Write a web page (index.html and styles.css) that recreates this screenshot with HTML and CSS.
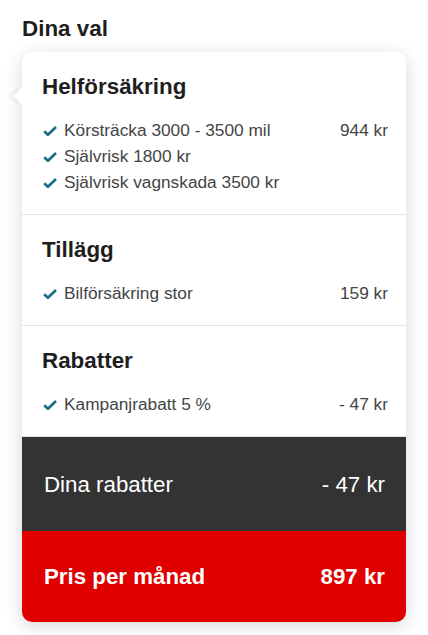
FILE: index.html
```html
<!DOCTYPE html>
<html lang="sv">
<head>
    <meta charset="UTF-8">
    <meta name="viewport" content="width=device-width, initial-scale=1.0">
    <title>Dina val</title>
    <link rel="stylesheet" href="styles.css">
</head>
<body>
    <div id="container">
        <h2 class="page-title">Dina val</h2>

        <div class="summary-card">
            <div class="section">
                <h3>Helförsäkring</h3>
                <ul class="item-list">
                    <li><svg class="check" viewBox="0 0 14 10"><path d="M1.2 5.2 L4.9 8.8 L13 1"/></svg><span class="label">Körsträcka 3000 - 3500 mil</span><span class="price">944 kr</span></li>
                    <li><svg class="check" viewBox="0 0 14 10"><path d="M1.2 5.2 L4.9 8.8 L13 1"/></svg><span class="label">Självrisk 1800 kr</span></li>
                    <li><svg class="check" viewBox="0 0 14 10"><path d="M1.2 5.2 L4.9 8.8 L13 1"/></svg><span class="label">Självrisk vagnskada 3500 kr</span></li>
                </ul>
            </div>

            <div class="section">
                <h3>Tillägg</h3>
                <ul class="item-list">
                    <li><svg class="check" viewBox="0 0 14 10"><path d="M1.2 5.2 L4.9 8.8 L13 1"/></svg><span class="label">Bilförsäkring stor</span><span class="price">159 kr</span></li>
                </ul>
            </div>

            <div class="section">
                <h3>Rabatter</h3>
                <ul class="item-list">
                    <li><svg class="check" viewBox="0 0 14 10"><path d="M1.2 5.2 L4.9 8.8 L13 1"/></svg><span class="label">Kampanjrabatt 5 %</span><span class="price">- 47 kr</span></li>
                </ul>
            </div>

            <div class="total-row discounts">
                <span>Dina rabatter</span>
                <span>- 47 kr</span>
            </div>
            <div class="total-row monthly">
                <span>Pris per månad</span>
                <span>897 kr</span>
            </div>
        </div>
    </div>
</body>
</html>
```

FILE: styles.css
```css
body {
    font-family: "Liberation Sans", Arial, sans-serif;
    background-color: #ffffff;
    margin: 0;
    padding: 0;
    color: #1e1e1e;
}

#container {
    padding: 16px 22px 14px 22px;
}

.page-title {
    font-size: 22.4px;
    font-weight: bold;
    line-height: 25px;
    margin: 0 0 11px 0;
    color: #1e1e1e;
}

.summary-card {
    position: relative;
    background-color: #ffffff;
    border-radius: 10px;
    box-shadow: 0 4px 18px rgba(0, 0, 0, 0.16);
}

/* little pointer on the left side */
.summary-card::before {
    content: "";
    position: absolute;
    left: -6px;
    top: 38px;
    width: 12px;
    height: 12px;
    background-color: #ffffff;
    transform: rotate(45deg);
    box-shadow: -3px 3px 5px rgba(0, 0, 0, 0.06);
}

.section {
    position: relative;
    padding: 21px 18px 19px 20px;
    border-bottom: 1px solid #e2e2e2;
}

.section:last-of-type {
    border-bottom: none;
}

.section h3 {
    font-size: 22.4px;
    font-weight: bold;
    line-height: 28px;
    margin: 0 0 16px 0;
    color: #1e1e1e;
}

.item-list {
    list-style: none;
    margin: 0;
    padding: 0;
}

.item-list li {
    display: flex;
    align-items: center;
    font-size: 17.3px;
    line-height: 26px;
    color: #454545;
}

.check {
    width: 14px;
    height: 10px;
    margin: 1px 7px 0 1px;
    flex-shrink: 0;
}

.check path {
    fill: none;
    stroke: #1d6e8a;
    stroke-width: 2.7;
}

.label {
    flex: 1;
}

.price {
    white-space: nowrap;
}

.total-row {
    display: flex;
    justify-content: space-between;
    align-items: center;
    padding: 0 21px 0 22px;
    font-size: 22.3px;
    line-height: 25px;
    color: #ffffff;
}

.discounts {
    height: 94px;
    background-color: #333333;
}

.monthly {
    height: 91px;
    background-color: #e00000;
    font-weight: bold;
    border-radius: 0 0 10px 10px;
}
```
